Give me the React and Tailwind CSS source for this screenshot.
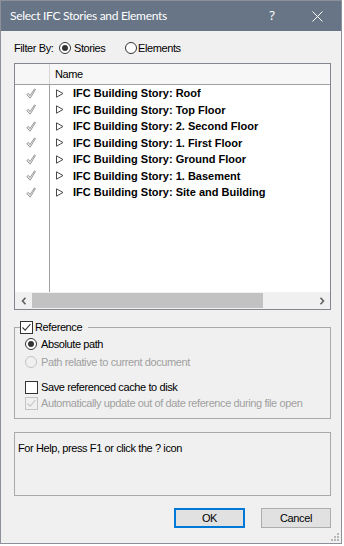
const stories = [
  "Roof",
  "Top Floor",
  "2. Second Floor",
  "1. First Floor",
  "Ground Floor",
  "1. Basement",
  "Site and Building",
];

function GrayCheck() {
  return (
    <svg width="10" height="11" viewBox="0 0 10 11">
      <path
        d="M0.8 6.6 L2.4 5.4 L4 7.6 L8.6 0.8 L9.4 1.6 L4.2 10.2 Z"
        fill="#f4f4f4"
        stroke="#8c8c8c"
        strokeWidth="0.9"
        strokeLinejoin="round"
      />
    </svg>
  );
}

function Triangle() {
  return (
    <svg width="8" height="9" viewBox="0 0 8 9">
      <path d="M0.5 0.8 L7 4.5 L0.5 8.2 Z" fill="none" stroke="#4a4a4a" strokeWidth="1" />
    </svg>
  );
}

function Radio({ checked, disabled }) {
  return (
    <span
      className={
        "w-[12px] h-[12px] rounded-full border flex items-center justify-center shrink-0 " +
        (disabled ? "border-[#c4c4c4] bg-[#f0f0f0]" : "border-[#333333] bg-white")
      }
    >
      {checked && <span className="w-[6px] h-[6px] rounded-full bg-[#333333]" />}
    </span>
  );
}

function Box({ checked, disabled }) {
  return (
    <span
      className={
        "w-[13px] h-[13px] border flex items-center justify-center shrink-0 " +
        (disabled ? "border-[#c4c4c4] bg-[#f0f0f0]" : "border-[#333333] bg-white")
      }
    >
      {checked && (
        <svg width="11" height="11" viewBox="0 0 11 11">
          <path
            d="M1.5 5.5 L4.2 8.2 L9.5 2"
            fill="none"
            stroke={disabled ? "#c4c4c4" : "#333"}
            strokeWidth="1.1"
          />
        </svg>
      )}
    </span>
  );
}

export default function App() {
  return (
    <div className="w-[344px] h-[546px] bg-white">
      <div
        className="relative w-[342px] h-[544px] border border-[#8c9099] bg-[#f0f0f0] flex flex-col text-[11px] tracking-[-0.4px] text-black"
        style={{ fontFamily: '"Liberation Sans", Arial, sans-serif' }}
      >
        {/* Title bar */}
        <div className="h-[30px] bg-[#677587] flex items-center pl-[9px] text-white shrink-0">
          <span
            className="text-[12px] tracking-[-0.3px] flex-1"
            style={{ fontFamily: 'Lato, "Noto Sans", sans-serif' }}
          >
            Select IFC Stories and Elements
          </span>
          <span
            className="text-[13px] w-[46px] text-center tracking-normal"
            style={{ fontFamily: '"Noto Sans", sans-serif' }}
          >
            ?
          </span>
          <span className="w-[46px] pr-[2px] flex justify-center">
            <svg width="11" height="11" viewBox="0 0 11 11">
              <path d="M0.5 0.5 L10.5 10.5 M10.5 0.5 L0.5 10.5" stroke="#fff" strokeWidth="1" />
            </svg>
          </span>
        </div>

        <div className="flex-1 flex flex-col pl-[13px] pr-[10px]">
          {/* Filter row */}
          <div className="mt-[9px] h-[16px] flex items-center">
            <span className="w-[45px]">Filter By:</span>
            <Radio checked />
            <span className="ml-[3px] w-[51px]">Stories</span>
            <Radio />
            <span className="ml-[1px]">Elements</span>
          </div>

          {/* List */}
          <div className="mt-[7px] h-[247px] border border-[#828790] bg-white flex flex-col">
            <div className="h-[21px] flex bg-[#f7f7f7] border-b border-[#a0a0a0]">
              <div className="w-[35px] border-r border-[#d5d5d5]" />
              <div className="pl-[5px] flex items-center">Name</div>
            </div>
            {stories.map((s) => (
              <div key={s} className="h-[16.5px] flex">
                <div className="w-[35px] border-r border-[#a0a0a0] flex items-center justify-center pr-[2px]">
                  <GrayCheck />
                </div>
                <div className="flex items-center pl-[6px]">
                  <Triangle />
                  <span className="ml-[9px] font-bold tracking-normal">IFC Building Story: {s}</span>
                </div>
              </div>
            ))}
            <div className="flex-1 flex">
              <div className="w-[35px] border-r border-[#a0a0a0]" />
            </div>
            {/* Scrollbar */}
            <div className="h-[17px] flex bg-[#f0f0f0] items-center">
              <div className="w-[17px] flex justify-center">
                <svg width="6" height="8" viewBox="0 0 6 8">
                  <path d="M4.5 0.8 L1.5 4 L4.5 7.2" fill="none" stroke="#606060" strokeWidth="1.6" />
                </svg>
              </div>
              <div className="w-[231px] h-[15px] bg-[#c2c2c2]" />
              <div className="flex-1" />
              <div className="w-[17px] flex justify-center">
                <svg width="6" height="8" viewBox="0 0 6 8">
                  <path d="M1.5 0.8 L4.5 4 L1.5 7.2" fill="none" stroke="#606060" strokeWidth="1.6" />
                </svg>
              </div>
            </div>
          </div>

          {/* Reference group */}
          <fieldset className="mt-[11px] border border-[#a9a9a9] pb-[7px]">
            <legend className="ml-[5px] pr-[6px] flex items-center h-[13px]">
              <Box checked />
              <span className="ml-[2px]">Reference</span>
            </legend>
            <div className="pl-[10px]">
              <div className="mt-[2px] h-[16px] flex items-center">
                <Radio checked />
                <span className="ml-[4px]">Absolute path</span>
              </div>
              <div className="mt-[2px] h-[16px] flex items-center text-[#a0a0a0]">
                <Radio disabled />
                <span className="ml-[4px]">Path relative to current document</span>
              </div>
              <div className="mt-[9px] h-[16px] flex items-center">
                <Box />
                <span className="ml-[3px]">Save referenced cache to disk</span>
              </div>
              <div className="h-[16px] flex items-center text-[#a0a0a0]">
                <Box checked disabled />
                <span className="ml-[3px]">Automatically update out of date reference during file open</span>
              </div>
            </div>
          </fieldset>

          {/* Help box */}
          <div className="mt-[13px] h-[64px] border border-[#a9a9a9] pl-[3px] pt-[7px]">
            For Help, press F1 or click the ? icon
          </div>

          {/* Buttons */}
          <div className="mt-[12px] flex justify-end gap-[16px]">
            <button className="w-[71px] h-[20px] border-2 border-[#0078d7] bg-[#e1e1e1] text-[11px]">
              OK
            </button>
            <button className="w-[70px] h-[20px] border border-[#adadad] bg-[#e1e1e1] text-[11px]">
              Cancel
            </button>
          </div>
        </div>

        {/* Size grip */}
        <svg className="absolute right-[1px] bottom-[1px]" width="10" height="10" viewBox="0 0 10 10">
          {[
            [7, 1],
            [4, 4],
            [7, 4],
            [1, 7],
            [4, 7],
            [7, 7],
          ].map(([x, y]) => (
            <rect key={x + "-" + y} x={x} y={y} width="2" height="2" fill="#b8b8b8" />
          ))}
        </svg>
      </div>
    </div>
  );
}
